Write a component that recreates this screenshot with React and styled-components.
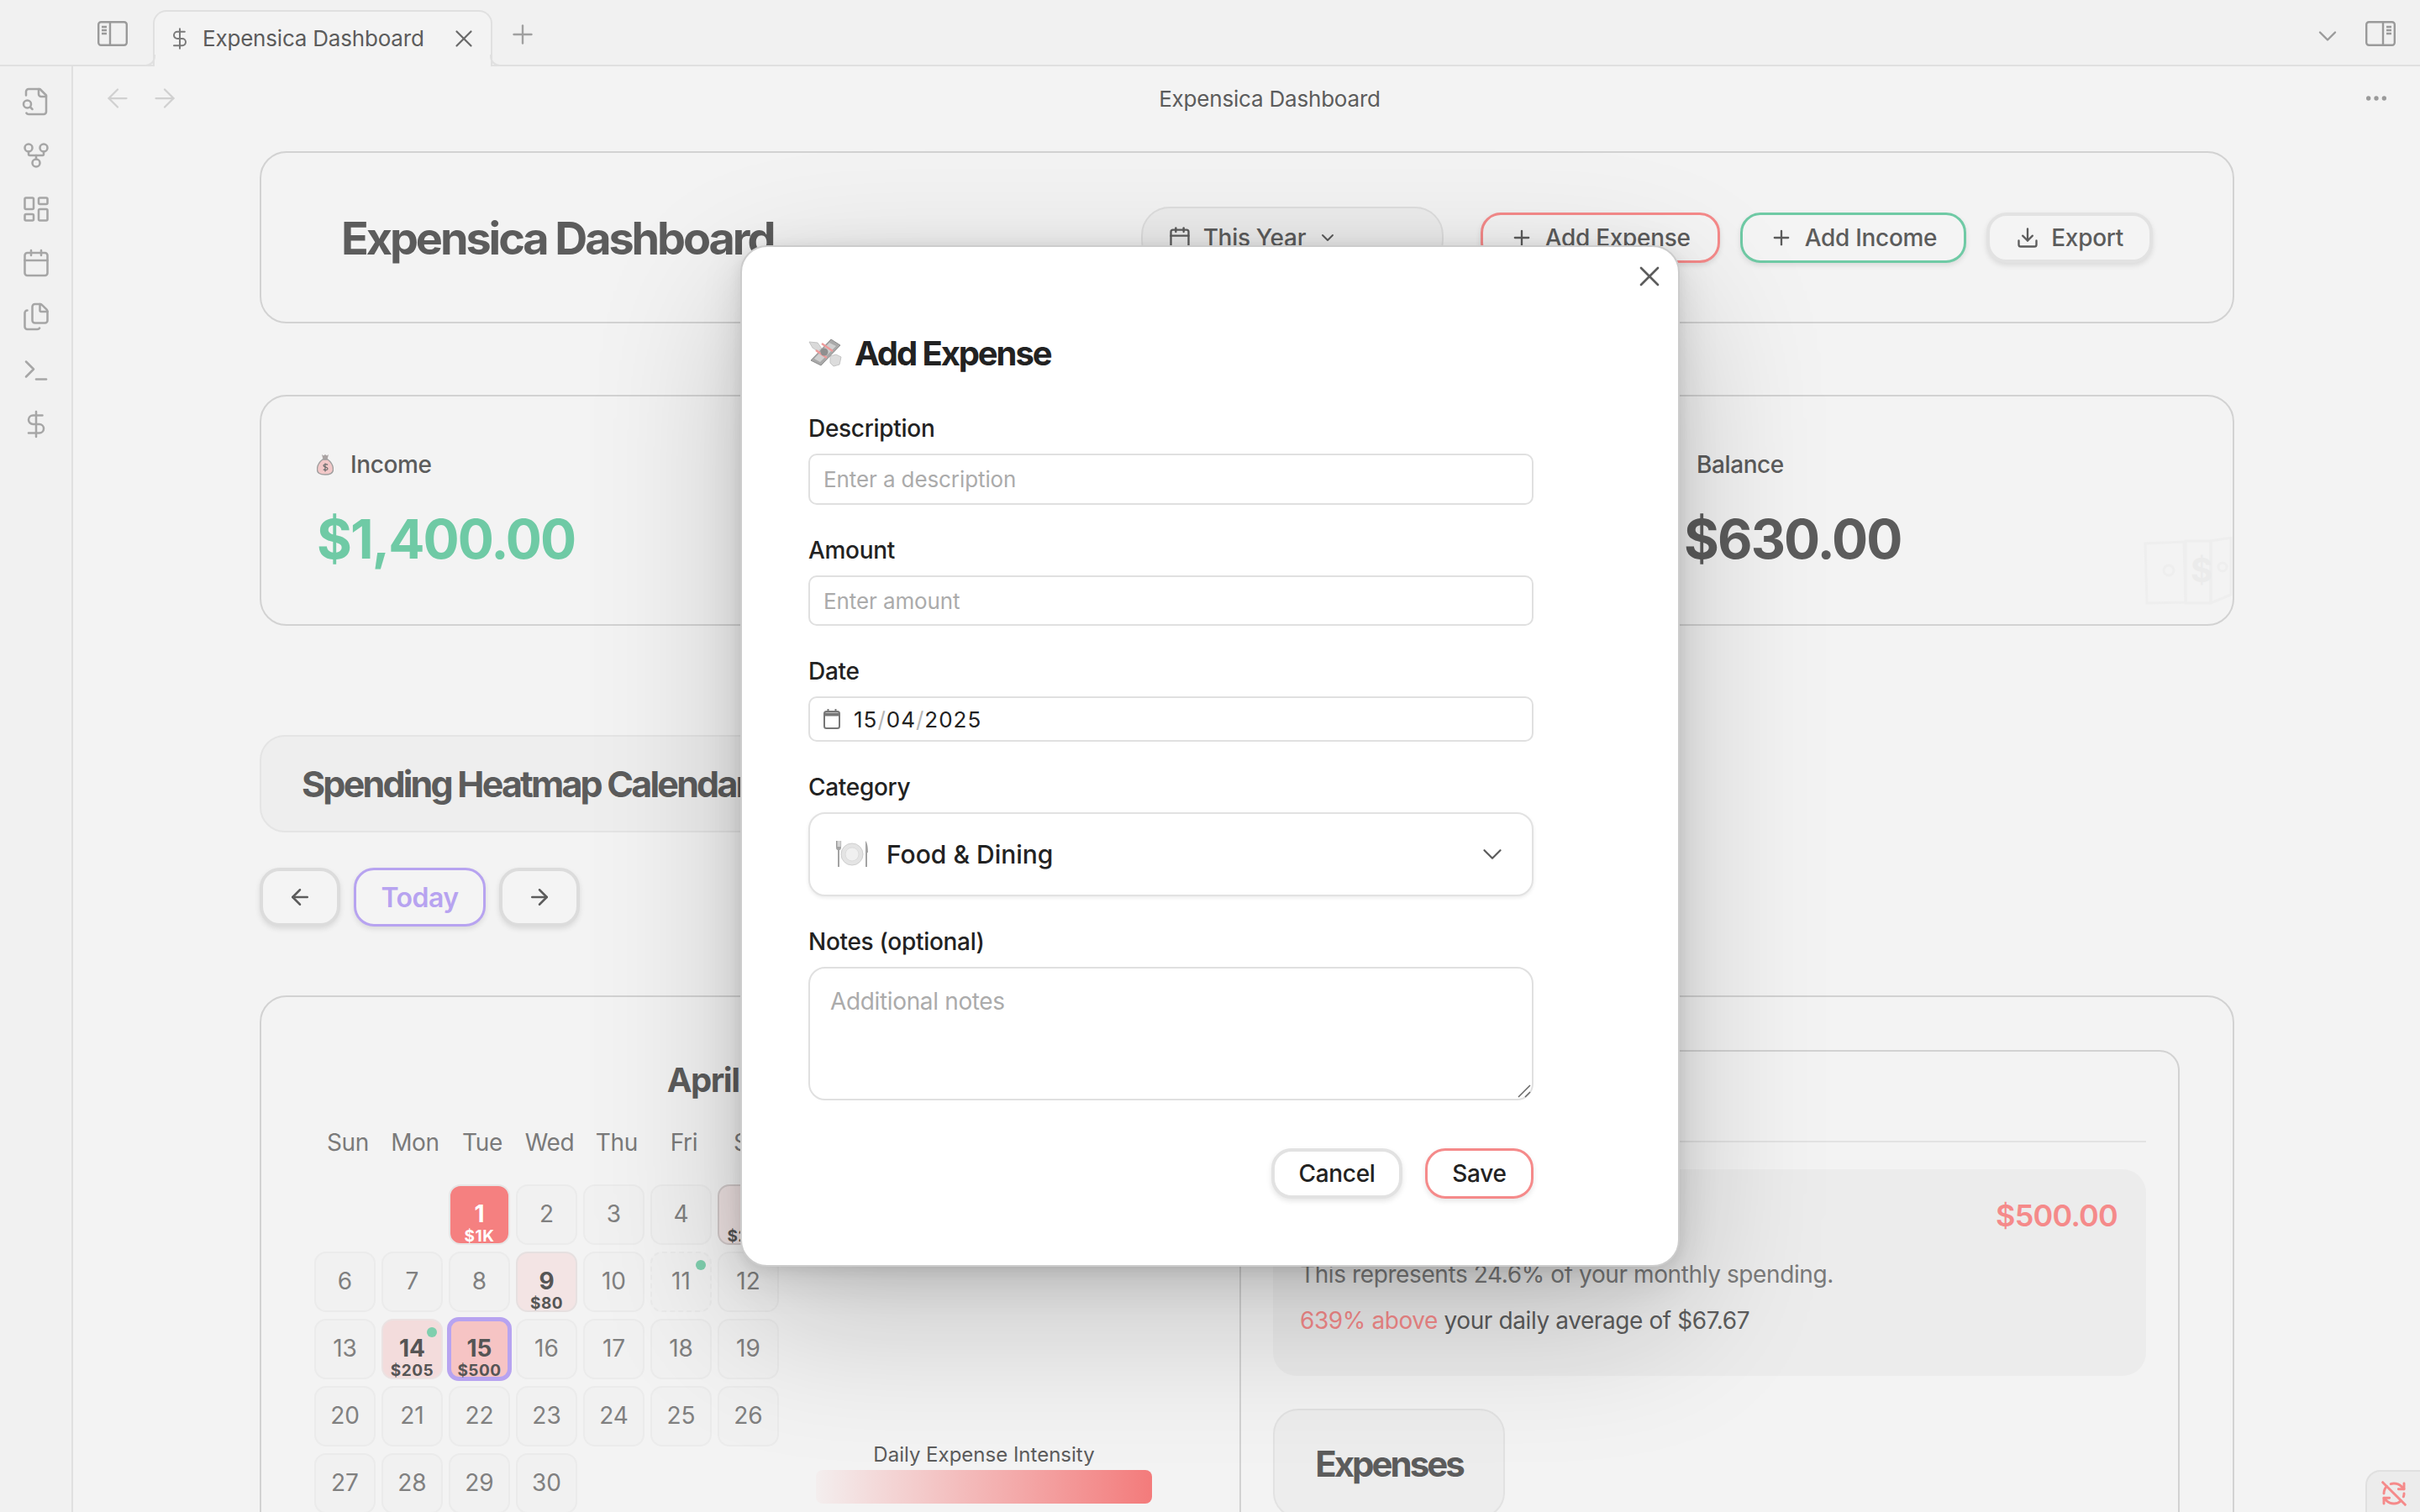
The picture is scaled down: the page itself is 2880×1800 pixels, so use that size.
import React from 'react';
import styled, { createGlobalStyle } from 'styled-components';
import {
  ArrowLeft, ArrowRight, Calendar, ChevronDown, DollarSign, Download, Ellipsis, Files,
  GitFork, LayoutDashboard, Plus, RefreshCwOff, Terminal, X,
} from 'lucide-react';

const GlobalStyle = createGlobalStyle`
  html, body {
    margin: 0;
    padding: 0;
    background: #f3f3f3;
    font-family: Inter, "Liberation Sans", sans-serif;
    color: #5c5c5c;
    overflow: hidden;
  }
  * { box-sizing: border-box; }
`;

const Shell = styled.div`
  width: 2880px;
  height: 1800px;
  display: flex;
  flex-direction: column;
  overflow: hidden;
  position: relative;
`;

/* top tab strip */
const TabBar = styled.div`
  height: 79px;
  flex: none;
  display: flex;
  align-items: flex-end;
  background: #f1f1f1;
  border-bottom: 2px solid #e0e0e0;
  padding-left: 116px;
`;

const ToggleSlot = styled.div`
  width: 66px;
  height: 77px;
  display: flex;
  padding-top: 25px;
  color: #9a9a9a;
`;

const Tab = styled.div`
  position: relative;
  width: 404px;
  height: 67px;
  margin-bottom: -2px;
  display: flex;
  align-items: center;
  padding: 0 15px 2px 16px;
  background: #f3f3f3;
  border: 2px solid #e0e0e0;
  border-bottom: none;
  border-radius: 16px 16px 0 0;
  font-size: 26px;
  letter-spacing: -0.2px;
  color: #5c5c5c;
  &::before, &::after {
    content: '';
    position: absolute;
    bottom: 0;
    width: 12px;
    height: 12px;
    border-bottom: 2px solid #e0e0e0;
  }
  &::before { left: -13px; border-right: 2px solid #e0e0e0; border-bottom-right-radius: 12px; }
  &::after { right: -13px; border-left: 2px solid #e0e0e0; border-bottom-left-radius: 12px; }
`;

const TabTitle = styled.span`
  margin-left: 13px;
  flex: 1;
  white-space: nowrap;
`;

const NewTab = styled.div`
  margin: 0 0 18px 18px;
  height: 36px;
  color: #a0a0a0;
`;

const TabBarEnd = styled.div`
  margin-left: auto;
  height: 77px;
  display: flex;
  align-items: flex-start;
  padding: 25px 29px 0 0;
  gap: 27px;
  color: #9a9a9a;
`;

const Body = styled.div`
  flex: 1;
  display: flex;
  min-height: 0;
`;

const Ribbon = styled.div`
  width: 87px;
  flex: none;
  display: flex;
  flex-direction: column;
  align-items: center;
  gap: 28px;
  padding-top: 24px;
  background: #f1f1f1;
  border-right: 2px solid #e0e0e0;
  color: #a6a6a6;
`;

const Workspace = styled.div`
  flex: 1;
  min-width: 0;
  display: flex;
  flex-direction: column;
`;

const ViewHeader = styled.div`
  height: 78px;
  flex: none;
  display: flex;
  align-items: center;
  padding: 0 36px 2px 35px;
  color: #d0d0d0;
`;

const NavArrows = styled.div`
  display: flex;
  gap: 20px;
  width: 300px;
`;

const ViewTitle = styled.div`
  flex: 1;
  text-align: center;
  padding-right: 212px;
  font-size: 26px;
  letter-spacing: -0.2px;
  color: #5c5c5c;
`;

const More = styled.div`
  color: #9a9a9a;
  height: 32px;
`;

const Content = styled.div`
  flex: 1;
  min-height: 0;
  padding: 23px 221px 0 222px;
  overflow: hidden;
`;

const Card = styled.div`
  background: #f3f3f3;
  border: 2px solid #d2d2d2;
  border-radius: 32px;
`;

const HeaderCard = styled(Card)`
  height: 205px;
  display: flex;
  align-items: center;
  padding: 0 95px 0 95px;
`;

const PageTitle = styled.h1`
  margin: 2px 0 0;
  font-size: 54px;
  font-weight: 700;
  letter-spacing: -3.1px;
  color: #5c5c5c;
  white-space: nowrap;
`;

const RangeSelect = styled.div`
  margin-left: auto;
  width: 360px;
  height: 74px;
  display: flex;
  align-items: center;
  gap: 14px;
  padding: 0 0 0 30px;
  background: #ededed;
  border: 2px solid #dedede;
  border-radius: 34px;
  font-size: 28px;
  font-weight: 500;
  letter-spacing: -0.3px;
`;

const Button = styled.button`
  width: ${(p) => p.$width || 'auto'};
  height: 60px;
  display: inline-flex;
  align-items: center;
  justify-content: center;
  gap: 14px;
  padding: 0 ${(p) => (p.$width ? '0' : p.$compact ? '31px' : '32px')};
  font: 500 28px Inter, "Liberation Sans", sans-serif;
  letter-spacing: -0.3px;
  color: ${(p) => (p.$dark ? '#222222' : '#5c5c5c')};
  background: ${(p) => (p.$dark ? '#ffffff' : '#f4f4f4')};
  border: ${(p) => (p.$line ? `3px solid ${p.$line}` : '4px solid #e2e2e2')};
  border-radius: 24px;
  box-shadow: 0 3px 6px rgba(0, 0, 0, 0.1);
`;

const HeaderActions = styled.div`
  display: flex;
  gap: 24px;
  margin-left: 44px;
`;

const StatsCard = styled(Card)`
  margin-top: 85px;
  height: 275px;
  position: relative;
  display: grid;
  grid-template-columns: repeat(3, 605px);
  column-gap: 196px;
  padding: 62px 66px 0;
`;

const StatLabel = styled.div`
  height: 38px;
  display: flex;
  align-items: center;
  gap: 20px;
  font-size: 28px;
  font-weight: 500;
  letter-spacing: -0.4px;
  color: #5c5c5c;
`;

const StatValue = styled.div`
  margin-top: 30px;
  margin-left: ${(p) => p.$indent || 0}px;
  font-size: 64px;
  line-height: 80px;
  font-weight: 700;
  letter-spacing: -1.9px;
  color: ${(p) => p.$color || '#5c5c5c'};
`;

const Watermark = styled.svg`
  position: absolute;
  right: 0;
  bottom: 20px;
`;

const SectionCard = styled.div`
  margin-top: 130px;
  width: 760px;
  height: 116px;
  display: flex;
  align-items: center;
  padding-left: 48px;
  background: #eeeeee;
  border: 2px solid #e4e4e4;
  border-radius: 30px;
  font-size: 43px;
  font-weight: 700;
  letter-spacing: -2.8px;
  white-space: nowrap;
  color: #5c5c5c;
`;

const CalendarNav = styled.div`
  margin-top: 42px;
  display: flex;
  gap: 16px;
`;

const NavButton = styled.button`
  width: ${(p) => (p.$wide ? '157px' : '96px')};
  height: 70px;
  display: inline-flex;
  align-items: center;
  justify-content: center;
  font: 600 32px Inter, "Liberation Sans", sans-serif;
  letter-spacing: -0.5px;
  color: ${(p) => (p.$wide ? '#b7a3f0' : '#5c5c5c')};
  background: #f4f4f4;
  border: ${(p) => (p.$wide ? '3px solid #b7a3f0' : '4px solid #dcdcdc')};
  border-radius: 24px;
  box-shadow: 0 3px 6px rgba(0, 0, 0, 0.1);
`;

const CalendarCard = styled(Card)`
  margin-top: 82px;
  height: 760px;
  display: flex;
  gap: 71px;
  padding: 61px 63px 0 63px;
`;

const CalendarColumn = styled.div`
  width: 1030px;
  flex: none;
  margin-top: 13px;
`;

const MonthTitle = styled.div`
  text-align: center;
  font-size: 40px;
  line-height: 50px;
  font-weight: 700;
  letter-spacing: -1.5px;
  color: #5c5c5c;
`;

const CalendarRow = styled.div`
  display: flex;
  margin-top: 31px;
`;

const WeekGrid = styled.div`
  width: 560px;
  flex: none;
`;

const Weekdays = styled.div`
  display: grid;
  grid-template-columns: repeat(7, 80px);
  height: 36px;
  margin-bottom: 32px;
  font-size: 28px;
  line-height: 36px;
  letter-spacing: -0.3px;
  text-align: center;
  color: #7a7a7a;
`;

const Days = styled.div`
  display: grid;
  grid-template-columns: repeat(7, 73px);
  grid-auto-rows: 72px;
  column-gap: 7px;
  row-gap: 8px;
`;

const toneColors = {
  none: ['#f1f1f1', '#ebebeb'],
  high: ['#f58080', '#e6e6e6'],
  soft: ['#f3e4e4', '#e6e0e0'],
  low: ['#f3dcdc', '#ebe2e2'],
  mid: ['#f6c4c4', '#b7a3f0'],
  side: ['#eee2e2', '#d2caca'],
};

const Day = styled.div`
  position: relative;
  display: flex;
  flex-direction: column;
  align-items: center;
  margin: ${(p) => (p.$selected ? '-2px' : '0')};
  padding-top: ${(p) => (p.$selected ? '15px' : '16px')};
  background: ${(p) => toneColors[p.$tone][0]};
  border: ${(p) => (p.$selected ? '5px' : '2px')} ${(p) => (p.$dashed ? 'dashed' : 'solid')} ${(p) => toneColors[p.$tone][1]};
  border-radius: 14px;
  color: ${(p) => (p.$tone === 'high' ? '#ffffff' : p.$amount ? '#555555' : '#808080')};
`;

const DayNumber = styled.div`
  font-size: 28px;
  line-height: 34px;
  font-weight: ${(p) => (p.$bold ? 700 : 400)};
`;

const DayAmount = styled.div`
  font-size: 19px;
  line-height: 20px;
  font-weight: 700;
  letter-spacing: 0.5px;
`;

const IncomeDot = styled.span`
  position: absolute;
  top: 8px;
  right: 5px;
  width: 12px;
  height: 12px;
  border-radius: 50%;
  background: #7fcfae;
`;

const Legend = styled.div`
  margin: 375px 0 0 37px;
  width: 400px;
  flex: none;
`;

const LegendLabel = styled.div`
  text-align: center;
  font-size: 24px;
  line-height: 30px;
  color: #5c5c5c;
`;

const LegendBar = styled.div`
  margin-top: 3px;
  height: 40px;
  border-radius: 8px;
  background: linear-gradient(to right, #f3eeee, #f37b7b);
`;

const DetailPanel = styled.div`
  flex: 1;
  height: 700px;
  margin-top: 2px;
  padding: 0 38px;
  border: 2px solid #d2d2d2;
  border-radius: 24px;
`;

const DetailTitle = styled.div`
  height: 108px;
  display: flex;
  align-items: center;
  font-size: 32px;
  font-weight: 600;
  border-bottom: 2px solid #e2e2e2;
`;

const DetailBox = styled.div`
  margin-top: 32px;
  height: 246px;
  padding: 30px 34px 0 32px;
  background: #ececec;
  border-radius: 28px;
`;

const DetailHead = styled.div`
  display: flex;
  justify-content: space-between;
  align-items: center;
  height: 50px;
  font-size: 32px;
  font-weight: 600;
`;

const Amount = styled.span`
  font-size: 36px;
  font-weight: 600;
  letter-spacing: -0.8px;
  color: #f58a8a;
`;

const DetailLine = styled.p`
  margin: ${(p) => p.$top}px 0 0;
  font-size: 28px;
  line-height: 36px;
  letter-spacing: -0.4px;
  color: ${(p) => p.$color || '#7a7a7a'};
`;

const Coral = styled.span`
  color: #f58a8a;
`;

const ExpensesTab = styled.div`
  margin-top: 39px;
  width: 276px;
  height: 130px;
  display: flex;
  align-items: center;
  justify-content: center;
  background: #ededed;
  border: 2px solid #e2e2e2;
  border-radius: 30px;
  font-size: 42px;
  font-weight: 700;
  letter-spacing: -3px;
`;

const SyncTag = styled.div`
  position: absolute;
  right: 0;
  bottom: 0;
  width: 65px;
  height: 50px;
  padding: 10px 0 0 16px;
  background: #ececec;
  border: 2px solid #e0e0e0;
  border-right: none;
  border-bottom: none;
  border-top-left-radius: 18px;
  color: #f58a8a;
`;

/* modal */
const Overlay = styled.div`
  position: absolute;
  inset: 0;
  display: flex;
  align-items: center;
  justify-content: center;
`;

const Modal = styled.div`
  position: relative;
  width: 1118px;
  height: 1216px;
  padding: 104px 0 0 79px;
  background: #ffffff;
  border: 2px solid #cccccc;
  border-radius: 32px;
  color: #222222;
  box-shadow: 0 3.6px 14.6px rgba(0, 0, 0, 0.071), 0 12.6px 49.4px rgba(0, 0, 0, 0.112), 0 60px 180px rgba(0, 0, 0, 0.2);
`;

const CloseIcon = styled.div`
  position: absolute;
  top: 15px;
  right: 14px;
  height: 40px;
  color: #5c5c5c;
`;

const ModalTitle = styled.div`
  height: 44px;
  display: flex;
  align-items: center;
  gap: 15px;
  font-size: 40px;
  font-weight: 700;
  letter-spacing: -2.1px;
  margin-bottom: 50px;
`;

const Form = styled.div`
  width: 863px;
  display: flex;
  flex-direction: column;
  gap: 36px;
`;

const Field = styled.label`
  display: flex;
  flex-direction: column;
  gap: 12px;
`;

const FieldLabel = styled.span`
  font-size: 28px;
  line-height: 36px;
  font-weight: 500;
  letter-spacing: -0.3px;
  color: #222222;
`;

const TextInput = styled.input`
  height: ${(p) => p.$height || 60}px;
  padding: 0 16px;
  font: 400 26px Inter, "Liberation Sans", sans-serif;
  letter-spacing: -0.1px;
  color: #222222;
  background: #ffffff;
  border: 2px solid #e0e0e0;
  border-radius: 10px;
  outline: none;
  &::placeholder { color: #ababab; opacity: 1; }
`;

const DateBox = styled.div`
  height: 54px;
  display: flex;
  align-items: center;
  gap: 15px;
  padding: 0 15px;
  background: #ffffff;
  border: 2px solid #e0e0e0;
  border-radius: 10px;
  font-size: 26px;
  letter-spacing: 1px;
  color: #222222;
`;

const DateSlash = styled.span`
  color: #b5b5b5;
`;

const SelectBox = styled.div`
  height: 100px;
  display: flex;
  align-items: center;
  padding: 0 28px 0 30px;
  background: #ffffff;
  border: 2px solid #e2e2e2;
  border-radius: 20px;
  box-shadow: 0 2px 4px rgba(0, 0, 0, 0.08);
  font-size: 30px;
  font-weight: 500;
  color: #222222;
`;

const SelectText = styled.span`
  margin-left: 21px;
  flex: 1;
`;

const NotesWrap = styled.div`
  position: relative;
  display: flex;
`;

const NotesInput = styled.textarea`
  flex: 1;
  height: 159px;
  padding: 22px 24px;
  font: 400 28px Inter, "Liberation Sans", sans-serif;
  letter-spacing: -0.35px;
  color: #222222;
  background: #ffffff;
  border: 2px solid #e0e0e0;
  border-radius: 20px;
  resize: none;
  outline: none;
  &::placeholder { color: #ababab; opacity: 1; }
`;

const ResizeHandle = styled.svg`
  position: absolute;
  right: 2px;
  bottom: 2px;
`;

const ModalButtons = styled.div`
  display: flex;
  justify-content: flex-end;
  gap: 27px;
  margin-top: 21px;
`;

const SidebarGlyph = ({ flip }) => (
  <svg width="36" height="30" viewBox="0 0 36 30" fill="none" stroke="currentColor" strokeWidth="2.4" style={flip ? { transform: 'scaleX(-1)' } : undefined}>
    <rect x="1.2" y="1.2" width="33.6" height="27.6" rx="3" />
    <path d="M15 1.2v27.6M5 7h6M5 11h6M5 15h6" />
  </svg>
);

const FileSearchGlyph = () => (
  <svg width="36" height="36" viewBox="0 0 24 24" fill="none" stroke="currentColor" strokeWidth="1.7" strokeLinecap="round" strokeLinejoin="round">
    <path d="M14 2v4a2 2 0 0 0 2 2h4" />
    <path d="M4.268 21a2 2 0 0 0 1.727 1H18a2 2 0 0 0 2-2V7l-5-5H6a2 2 0 0 0-2 2v3" />
    <path d="m9 18-1.500-1.500" />
    <circle cx="5" cy="14" r="3" />
  </svg>
);

const DateGlyph = () => (
  <svg width="22" height="26" viewBox="0 0 22 26" fill="none">
    <rect x="2" y="4" width="18" height="20" rx="2.500" stroke="#777777" strokeWidth="2" />
    <path d="M2 5.500h18v4H2z" fill="#777777" />
    <path d="M6.500 1v4M15.500 1v4" stroke="#777777" strokeWidth="2" />
  </svg>
);

const MoneyBag = () => (
  <svg width="20" height="26" viewBox="0 0 20 26">
    <path d="M6 1l2 1.500L10 1l2 1.500L14 1l-1.500 6h-5z" fill="#a9a2a2" />
    <path d="M7 7h6c4 3 6.500 8 6.500 12 0 4-3 6-9.500 6S.5 23 .5 19c0-4 2.500-9 6.500-12z" fill="#f2c8c8" stroke="#9f9f9f" strokeWidth="1.400" />
    <path d="M13 13.500c-1-1.200-5-1.300-5 .8 0 2.400 5 1.400 5 3.700 0 2.100-4 2-5.200.7M10 11.500v10" fill="none" stroke="#6f6f6f" strokeWidth="1.300" />
  </svg>
);

const MoneyWings = () => (
  <svg width="40" height="36" viewBox="0 0 40 36">
    <path d="M1 5l10 1 5 7-5 3-6-4z" fill="#d9d9d9" stroke="#c4c4c4" />
    <path d="M26 22l7-2 6 3-2 9-7 2-4-4z" fill="#dcdcdc" stroke="#c4c4c4" />
    <path d="M27 2l11 7-23 24-12-6z" fill="#a9a9a9" stroke="#8c8c8c" />
    <path d="M25 6l8 4-19 19-7-4z" fill="#cfcfcf" />
    <path d="M16 7l13 9M9 15l13 9" stroke="#ee9a9a" strokeWidth="2.400" />
    <circle cx="19" cy="17" r="4.500" fill="#8f8f8f" />
  </svg>
);

const PlateSetting = () => (
  <svg width="40" height="34" viewBox="0 0 40 34">
    <circle cx="20" cy="17" r="13" fill="#e4e4e4" stroke="#cfcfcf" />
    <circle cx="20" cy="17" r="8" fill="#f0f0f0" stroke="#dcdcdc" />
    <path d="M1 1v8c0 2 1 3 2 3v20h2V12c1 0 2-1 2-3V1H6v7H5V1H4v7H3V1z" fill="#a3a3a3" />
    <path d="M36 1c2 2 3 7 3 14h-1v17h-2z" fill="#a3a3a3" />
  </svg>
);

const BanknoteMark = () => (
  <Watermark width="106" height="84" viewBox="0 0 106 84" fill="none">
    <g stroke="#eeeeee" strokeWidth="3">
      <path d="M2 8l46-2 2 72-46 1z" />
      <path d="M50 5h30v74H50z" />
      <path d="M80 5l24-4v68l-24 10z" />
      <circle cx="30" cy="40" r="6" />
      <circle cx="94" cy="36" r="5" />
    </g>
    <text x="56" y="54" fontFamily="Inter, sans-serif" fontSize="40" fontWeight="700" fill="#ebebeb">$</text>
  </Watermark>
);

const weekdays = ['Sun', 'Mon', 'Tue', 'Wed', 'Thu', 'Fri', 'Sat'];

const days = [
  null, null,
  { n: 1, amount: '$1K', tone: 'high' }, { n: 2 }, { n: 3 }, { n: 4 }, { n: 5, amount: '$247', tone: 'side' },
  { n: 6 }, { n: 7 }, { n: 8 }, { n: 9, amount: '$80', tone: 'soft' }, { n: 10 }, { n: 11, dot: true, dashed: true }, { n: 12 },
  { n: 13 }, { n: 14, amount: '$205', tone: 'low', dot: true }, { n: 15, amount: '$500', tone: 'mid', selected: true }, { n: 16 }, { n: 17 }, { n: 18 }, { n: 19 },
  { n: 20 }, { n: 21 }, { n: 22 }, { n: 23 }, { n: 24 }, { n: 25 }, { n: 26 },
  { n: 27 }, { n: 28 }, { n: 29 }, { n: 30 },
];

export default function App() {
  return (
    <Shell>
      <GlobalStyle />
      <TabBar>
        <ToggleSlot><SidebarGlyph /></ToggleSlot>
        <Tab>
          <DollarSign size={28} strokeWidth={1.7} color="#7a7a7a" />
          <TabTitle>Expensica Dashboard</TabTitle>
          <X size={34} strokeWidth={1.6} color="#6a6a6a" />
        </Tab>
        <NewTab><Plus size={36} strokeWidth={1.6} /></NewTab>
        <TabBarEnd>
          <ChevronDown size={36} strokeWidth={1.6} />
          <SidebarGlyph flip />
        </TabBarEnd>
      </TabBar>

      <Body>
        <Ribbon>
          <FileSearchGlyph />
          <GitFork size={36} strokeWidth={1.7} />
          <LayoutDashboard size={36} strokeWidth={1.7} />
          <Calendar size={36} strokeWidth={1.7} />
          <Files size={36} strokeWidth={1.7} />
          <Terminal size={36} strokeWidth={1.7} />
          <DollarSign size={36} strokeWidth={1.7} />
        </Ribbon>

        <Workspace>
          <ViewHeader>
            <NavArrows>
              <ArrowLeft size={36} strokeWidth={1.5} />
              <ArrowRight size={36} strokeWidth={1.5} />
            </NavArrows>
            <ViewTitle>Expensica Dashboard</ViewTitle>
            <More><Ellipsis size={32} strokeWidth={2} /></More>
          </ViewHeader>

          <Content>
            <HeaderCard>
              <PageTitle>Expensica Dashboard</PageTitle>
              <RangeSelect>
                <Calendar size={28} strokeWidth={2} />
                <span>This Year</span>
                <ChevronDown size={24} strokeWidth={2} />
              </RangeSelect>
              <HeaderActions>
                <Button $line="#f58a8a"><Plus size={28} strokeWidth={2} />Add Expense</Button>
                <Button $line="#6fcaa5"><Plus size={28} strokeWidth={2} />Add Income</Button>
                <Button $compact><Download size={28} strokeWidth={2} />Export</Button>
              </HeaderActions>
            </HeaderCard>

            <StatsCard>
              <div>
                <StatLabel><MoneyBag />Income</StatLabel>
                <StatValue $color="#6fcaa5">$1,400.00</StatValue>
              </div>
              <div>
                <StatLabel>Expenses</StatLabel>
                <StatValue $color="#f58a8a">$770.00</StatValue>
              </div>
              <div>
                <StatLabel><MoneyBag />Balance</StatLabel>
                <StatValue $indent={25}>$630.00</StatValue>
              </div>
              <BanknoteMark />
            </StatsCard>

            <SectionCard>Spending Heatmap Calendar</SectionCard>

            <CalendarNav>
              <NavButton><ArrowLeft size={30} strokeWidth={2} /></NavButton>
              <NavButton $wide>Today</NavButton>
              <NavButton><ArrowRight size={30} strokeWidth={2} /></NavButton>
            </CalendarNav>

            <CalendarCard>
              <CalendarColumn>
                <MonthTitle>April 2025</MonthTitle>
                <CalendarRow>
                  <WeekGrid>
                    <Weekdays>
                      {weekdays.map((d) => <div key={d}>{d}</div>)}
                    </Weekdays>
                    <Days>
                      {days.map((d, i) => (d ? (
                        <Day key={d.n} $tone={d.tone || 'none'} $selected={d.selected} $dashed={d.dashed} $amount={d.amount}>
                          <DayNumber $bold={d.amount}>{d.n}</DayNumber>
                          {d.amount && <DayAmount>{d.amount}</DayAmount>}
                          {d.dot && <IncomeDot />}
                        </Day>
                      ) : <div key={'empty' + i} />))}
                    </Days>
                  </WeekGrid>
                  <Legend>
                    <LegendLabel>Daily Expense Intensity</LegendLabel>
                    <LegendBar />
                  </Legend>
                </CalendarRow>
              </CalendarColumn>

              <DetailPanel>
                <DetailTitle>April 15, 2025</DetailTitle>
                <DetailBox>
                  <DetailHead>
                    <span>Total Expenses</span>
                    <Amount>$500.00</Amount>
                  </DetailHead>
                  <DetailLine $top={27}>This represents 24.6% of your monthly spending.</DetailLine>
                  <DetailLine $top={19} $color="#5c5c5c"><Coral>639% above</Coral> your daily average of $67.67</DetailLine>
                </DetailBox>
                <ExpensesTab>Expenses</ExpensesTab>
              </DetailPanel>
            </CalendarCard>
          </Content>
        </Workspace>
      </Body>

      <SyncTag><RefreshCwOff size={32} strokeWidth={2.2} /></SyncTag>

      <Overlay>
        <Modal>
          <CloseIcon><X size={40} strokeWidth={1.6} /></CloseIcon>
          <ModalTitle><MoneyWings />Add Expense</ModalTitle>
          <Form>
            <Field>
              <FieldLabel>Description</FieldLabel>
              <TextInput $height={61} placeholder="Enter a description" />
            </Field>
            <Field>
              <FieldLabel>Amount</FieldLabel>
              <TextInput placeholder="Enter amount" />
            </Field>
            <Field>
              <FieldLabel>Date</FieldLabel>
              <DateBox>
                <DateGlyph />
                <span>15<DateSlash>/</DateSlash>04<DateSlash>/</DateSlash>2025</span>
              </DateBox>
            </Field>
            <Field>
              <FieldLabel>Category</FieldLabel>
              <SelectBox>
                <PlateSetting />
                <SelectText>Food &amp; Dining</SelectText>
                <ChevronDown size={38} strokeWidth={1.4} color="#5c5c5c" />
              </SelectBox>
            </Field>
            <Field>
              <FieldLabel>Notes (optional)</FieldLabel>
              <NotesWrap>
                <NotesInput placeholder="Additional notes" />
                <ResizeHandle width="18" height="18" viewBox="0 0 18 18" stroke="#666666" strokeWidth="1.500" fill="none">
                  <path d="M2 16L16 2M10 16l6-6" />
                </ResizeHandle>
              </NotesWrap>
            </Field>
            <ModalButtons>
              <Button $dark $width="156px">Cancel</Button>
              <Button $dark $width="129px" $line="#f58a8a">Save</Button>
            </ModalButtons>
          </Form>
        </Modal>
      </Overlay>
    </Shell>
  );
}
